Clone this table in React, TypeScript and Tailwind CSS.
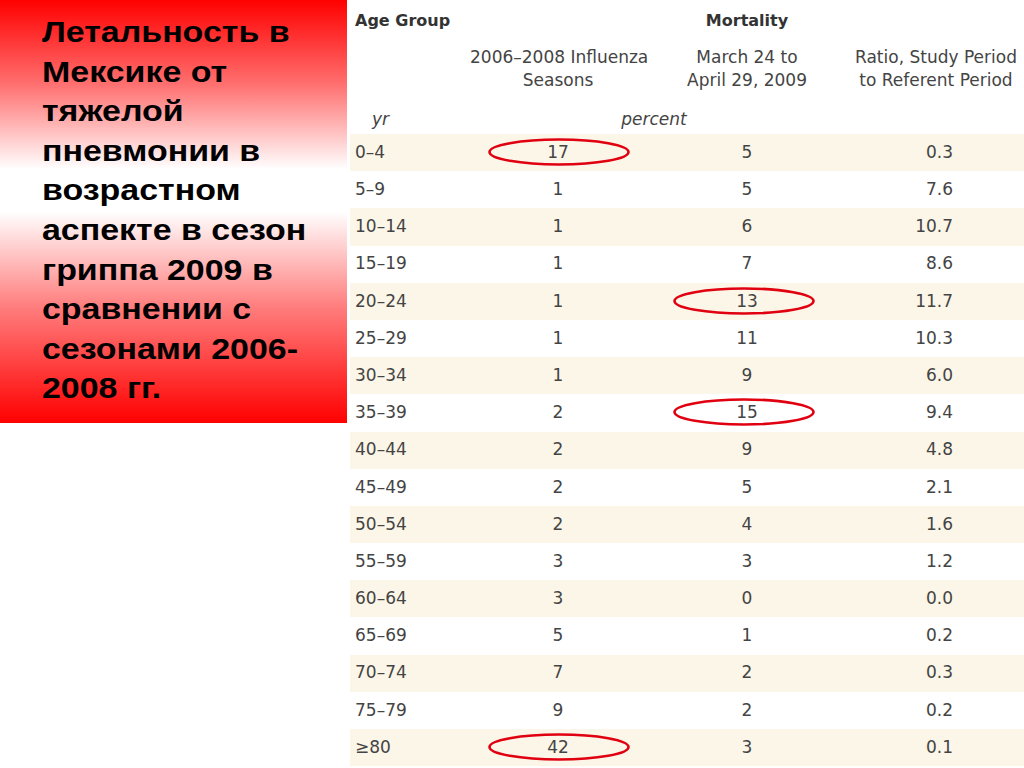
const rows = [
    { age: "0–4", seasons: "17", study: "5", ratio: "0.3", ringSeasons: true },
    { age: "5–9", seasons: "1", study: "5", ratio: "7.6" },
    { age: "10–14", seasons: "1", study: "6", ratio: "10.7" },
    { age: "15–19", seasons: "1", study: "7", ratio: "8.6" },
    { age: "20–24", seasons: "1", study: "13", ratio: "11.7", ringStudy: true },
    { age: "25–29", seasons: "1", study: "11", ratio: "10.3" },
    { age: "30–34", seasons: "1", study: "9", ratio: "6.0" },
    { age: "35–39", seasons: "2", study: "15", ratio: "9.4", ringStudy: true },
    { age: "40–44", seasons: "2", study: "9", ratio: "4.8" },
    { age: "45–49", seasons: "2", study: "5", ratio: "2.1" },
    { age: "50–54", seasons: "2", study: "4", ratio: "1.6" },
    { age: "55–59", seasons: "3", study: "3", ratio: "1.2" },
    { age: "60–64", seasons: "3", study: "0", ratio: "0.0" },
    { age: "65–69", seasons: "5", study: "1", ratio: "0.2" },
    { age: "70–74", seasons: "7", study: "2", ratio: "0.3" },
    { age: "75–79", seasons: "9", study: "2", ratio: "0.2" },
    { age: "≥80", seasons: "42", study: "3", ratio: "0.1", ringSeasons: true },
];

const Ring = ({ className }: { className: string }) => (
    <svg
        className={`pointer-events-none absolute ${className}`}
        width="144"
        height="30"
        viewBox="0 0 144 30"
    >
        <ellipse cx="72" cy="15" rx="69.5" ry="12.5" fill="none" stroke="#e00010" strokeWidth="2.6" />
    </svg>
);

const App = () => {
    return (
        <div className="flex h-[768px] w-[1024px] overflow-hidden bg-white">
            {/* slide title, the glyphs are a bit wider than plain Arial */}
            <div className="h-[423px] w-[347px] shrink-0 bg-[linear-gradient(to_bottom,#ff0000_0%,#ff7070_20%,#ffffff_40%,#ffffff_50%,#ff8080_72%,#ff0000_100%)] pl-[42px] pt-[13px]">
                <p className="w-[237px] origin-left scale-x-[1.17] font-['Liberation_Sans',Arial,sans-serif] text-[29px] font-bold leading-[39.6px] text-black">
                    Летальность в Мексике от тяжелой пневмонии в возрастном аспекте в сезон гриппа 2009 в сравнении с сезонами 2006-2008 гг.
                </p>
            </div>

            <div className="flex-1 pl-[3px] font-['DejaVu_Sans',sans-serif] text-[17px] text-[#444]">
                <div className="flex h-[42px] items-center">
                    <div className="w-[120px] pl-[5px] text-[16px] font-bold text-[#333]">Age Group</div>
                    <div className="w-[176px]" />
                    <div className="w-[202px] text-center text-[16px] font-bold text-[#333]">Mortality</div>
                </div>
                <div className="flex h-[60px] items-start pt-[4px] leading-[23px]">
                    <div className="w-[120px]" />
                    <div className="w-[176px] whitespace-nowrap text-center">
                        2006–2008 Influenza
                        <br />
                        Seasons
                    </div>
                    <div className="w-[202px] text-center">
                        March 24 to
                        <br />
                        April 29, 2009
                    </div>
                    <div className="w-[176px] whitespace-nowrap text-center">
                        Ratio, Study Period
                        <br />
                        to Referent Period
                    </div>
                </div>
                <div className="flex h-[32px] items-center pt-[4px] italic">
                    <div className="w-[120px] pl-[22px]">yr</div>
                    <div className="w-[176px]" />
                    <div className="-ml-[32px] w-[80px] text-center">percent</div>
                </div>

                {rows.map((row, i) => (
                    <div
                        key={row.age}
                        className={`flex h-[37.2px] items-center ${i % 2 === 0 ? "bg-[#fcf6e8]" : "bg-white"}`}
                    >
                        <div className="w-[120px] pl-[5px]">{row.age}</div>
                        <div className="relative flex h-full w-[176px] items-center justify-center">
                            {row.seasons}
                            {row.ringSeasons && <Ring className="left-[17px] top-[3px]" />}
                        </div>
                        <div className="relative flex h-full w-[202px] items-center justify-center">
                            {row.study}
                            {row.ringStudy && <Ring className="left-[26px] top-[3px]" />}
                        </div>
                        <div className="w-[105px] text-right">{row.ratio}</div>
                    </div>
                ))}
            </div>
        </div>
    );
};

export default App;
